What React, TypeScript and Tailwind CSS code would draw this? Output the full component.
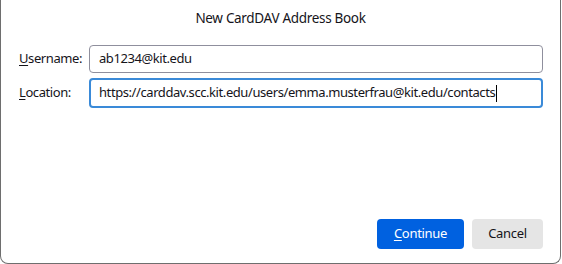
import React from "react";

export default function App() {
  const font = { fontFamily: '"Noto Sans", "Open Sans", sans-serif' };
  return (
    <div className="w-[562px] h-[264px] bg-white" style={font}>
      <div className="w-[561px] h-[264px] border-l border-r border-b border-[#6e6e6e] rounded-b-[8px] flex flex-col text-[#15141a]">
        <div className="h-[37px] flex items-center justify-center text-[13.5px] tracking-[-0.31px]">
          New CardDAV Address Book
        </div>
        <div className="pl-[18px] pr-[17px] pt-[8px] flex flex-col gap-[5px] text-[13px] tracking-[-0.42px]">
          <div className="flex items-center">
            <label className="w-[70px]">
              <span className="underline underline-offset-2">U</span>sername:
            </label>
            <div className="flex-1 h-[28px] border border-[#8f8f9d] rounded-[4px] flex items-center pl-[9px]">
              ab1234@kit.edu
            </div>
          </div>
          <div className="flex items-center">
            <label className="w-[70px]">
              <span className="underline underline-offset-2">L</span>ocation:
            </label>
            <div className="flex-1 h-[30px] border-2 border-[#3a8ad8] rounded-[4px] flex items-center pl-[8px]">
              <span>https://carddav.scc.kit.edu/users/emma.musterfrau@kit.edu/contacts</span>
              <span className="ml-[1px] w-px h-[17px] bg-black" />
            </div>
          </div>
        </div>
        <div className="flex-1" />
        <div className="flex justify-end gap-[8px] pr-[17px] pb-[14px] text-[13px] tracking-[-0.3px]">
          <button className="w-[87px] h-[30px] rounded-[4px] bg-[#0061e0] text-white">
            <span className="underline underline-offset-2">C</span>ontinue
          </button>
          <button className="w-[71px] h-[30px] rounded-[4px] bg-[#e5e5e5] text-[#15141a]">
            Cancel
          </button>
        </div>
      </div>
    </div>
  );
}
